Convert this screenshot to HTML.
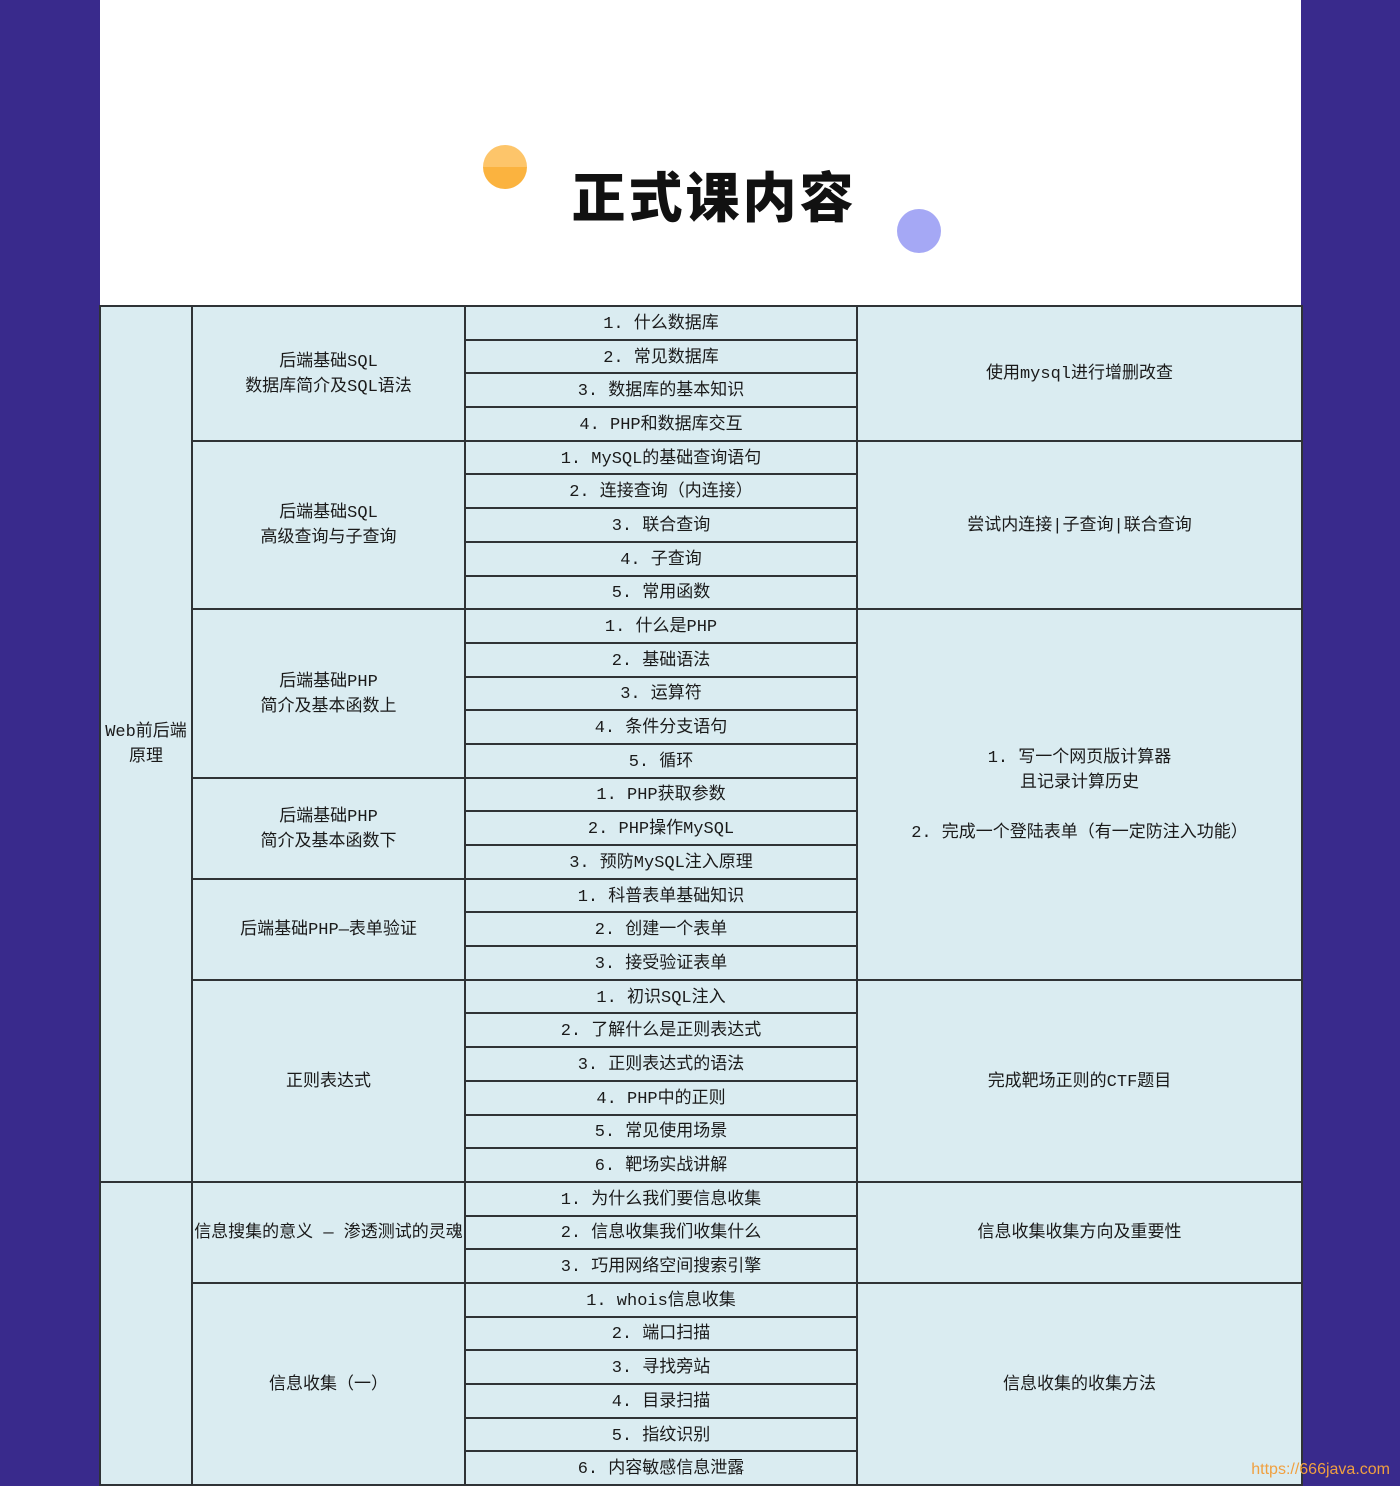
<!DOCTYPE html>
<html><head><meta charset="utf-8"><style>
html,body{margin:0;padding:0}
body{width:1400px;height:1484px;background:#392a8c;position:relative;overflow:hidden;font-family:"Liberation Mono","Noto Sans CJK SC",monospace}
.card{position:absolute;left:100px;top:0;width:1201px;height:1484px;background:#fff}
.title{position:absolute;left:14px;width:1400px;top:158px;text-align:center;font-size:54px;font-weight:900;color:#111;letter-spacing:3px;font-family:"Noto Sans CJK SC",sans-serif;line-height:72px}
.c1{position:absolute;left:483px;top:145px;width:44px;height:44px;border-radius:50%;background:linear-gradient(#fdc56a 50%,#fbb33f 50%)}
.c2{position:absolute;left:897px;top:209px;width:44px;height:44px;border-radius:50%;background:#a5a8f5}
table{position:absolute;left:99px;top:305px;width:1202px;border-collapse:collapse;table-layout:fixed;background:#daecf1}
td{border:2px solid #2f3336;padding:3px 0 0 0;text-align:center;vertical-align:middle;font-size:17px;color:#1a1a1a;line-height:25px;height:28.7px;overflow:hidden;white-space:nowrap}
td.l{white-space:normal}
</style></head><body>
<div class="card"></div>
<div class="c1"></div><div class="c2"></div>
<div class="title">正式课内容</div>
<table>
<colgroup><col style="width:92px"><col style="width:273px"><col style="width:392px"><col style="width:445px"></colgroup>
<tr><td rowspan="26" class="l">Web前后端<br>原理</td><td rowspan="4" class="l">后端基础SQL<br>数据库简介及SQL语法</td><td>1. 什么数据库</td><td rowspan="4">使用mysql进行增删改查</td></tr>
<tr><td>2. 常见数据库</td></tr>
<tr><td>3. 数据库的基本知识</td></tr>
<tr><td>4. PHP和数据库交互</td></tr>
<tr><td rowspan="5" class="l">后端基础SQL<br>高级查询与子查询</td><td>1. MySQL的基础查询语句</td><td rowspan="5">尝试内连接|子查询|联合查询</td></tr>
<tr><td>2. 连接查询（内连接）</td></tr>
<tr><td>3. 联合查询</td></tr>
<tr><td>4. 子查询</td></tr>
<tr><td>5. 常用函数</td></tr>
<tr><td rowspan="5" class="l">后端基础PHP<br>简介及基本函数上</td><td>1. 什么是PHP</td><td rowspan="11" class="l">1. 写一个网页版计算器<br>且记录计算历史<br><br>2. 完成一个登陆表单（有一定防注入功能）</td></tr>
<tr><td>2. 基础语法</td></tr>
<tr><td>3. 运算符</td></tr>
<tr><td>4. 条件分支语句</td></tr>
<tr><td>5. 循环</td></tr>
<tr><td rowspan="3" class="l">后端基础PHP<br>简介及基本函数下</td><td>1. PHP获取参数</td></tr>
<tr><td>2. PHP操作MySQL</td></tr>
<tr><td>3. 预防MySQL注入原理</td></tr>
<tr><td rowspan="3">后端基础PHP—表单验证</td><td>1. 科普表单基础知识</td></tr>
<tr><td>2. 创建一个表单</td></tr>
<tr><td>3. 接受验证表单</td></tr>
<tr><td rowspan="6">正则表达式</td><td>1. 初识SQL注入</td><td rowspan="6">完成靶场正则的CTF题目</td></tr>
<tr><td>2. 了解什么是正则表达式</td></tr>
<tr><td>3. 正则表达式的语法</td></tr>
<tr><td>4. PHP中的正则</td></tr>
<tr><td>5. 常见使用场景</td></tr>
<tr><td>6. 靶场实战讲解</td></tr>
<tr><td rowspan="9"></td><td rowspan="3"><div style="width:271px;overflow:hidden;white-space:nowrap;display:flex;justify-content:center"><span style="flex:none">信息搜集的意义 — 渗透测试的灵魂</span></div></td><td>1. 为什么我们要信息收集</td><td rowspan="3">信息收集收集方向及重要性</td></tr>
<tr><td>2. 信息收集我们收集什么</td></tr>
<tr><td>3. 巧用网络空间搜索引擎</td></tr>
<tr><td rowspan="6">信息收集（一）</td><td>1. whois信息收集</td><td rowspan="6">信息收集的收集方法</td></tr>
<tr><td>2. 端口扫描</td></tr>
<tr><td>3. 寻找旁站</td></tr>
<tr><td>4. 目录扫描</td></tr>
<tr><td>5. 指纹识别</td></tr>
<tr><td>6. 内容敏感信息泄露</td></tr>
</table>
<div style="position:absolute;right:10px;top:1461px;color:#f0a040;font-size:16px;font-family:'Liberation Sans',sans-serif">https://666java.com</div>
</body></html>
